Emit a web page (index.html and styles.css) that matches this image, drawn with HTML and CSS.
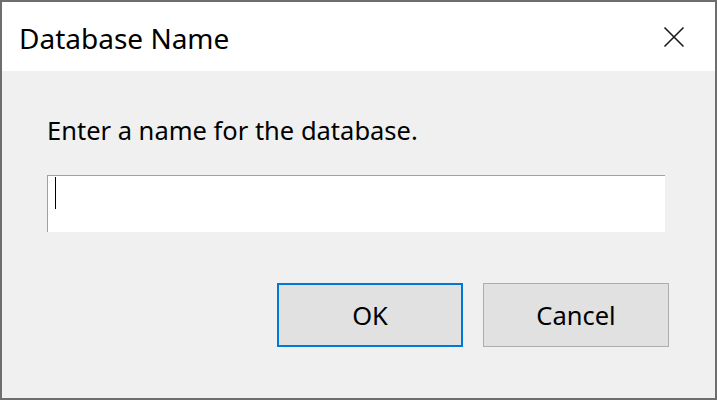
FILE: index.html
```html
<!DOCTYPE html>
<html lang="en">
<head>
    <meta charset="UTF-8">
    <meta name="viewport" content="width=device-width, initial-scale=1.0">
    <title>Database Name</title>
    <link rel="stylesheet" href="styles.css">
</head>
<body>

<div class="dialog">
    <div class="titlebar">
        <span class="title">Database Name</span>
        <button class="close" aria-label="Close">
            <svg width="22" height="22" viewBox="0 0 22 22">
                <path d="M1.5 1.5 L20.5 20.5 M20.5 1.5 L1.5 20.5" stroke="#1a1a1a" stroke-width="1.6" fill="none"/>
            </svg>
        </button>
    </div>
    <div class="content">
        <p class="prompt">Enter a name for the database.</p>
        <div class="field"><span class="caret"></span></div>
        <div class="actions">
            <button class="btn btn-default">OK</button>
            <button class="btn">Cancel</button>
        </div>
    </div>
</div>

</body>
</html>
```

FILE: styles.css
```css
body {
    margin: 0;
    font-family: "Segoe UI", "Noto Sans", sans-serif;
    color: #000;
}
.dialog {
    width: 717px;
    height: 400px;
    box-sizing: border-box;
    border: 2px solid #6e6e6e;
    background: #f0f0f0;
    display: flex;
    flex-direction: column;
}
.titlebar {
    height: 69px;
    background: #fff;
    display: flex;
    align-items: center;
    justify-content: space-between;
}
.title {
    margin-left: 17px;
    font-size: 28px;
    line-height: 1;
    margin-top: 3px;
}
.close {
    border: none;
    background: none;
    padding: 0;
    margin-right: 30px;
    width: 22px;
    height: 22px;
}
.close svg {
    display: block;
}
.content {
    padding: 0 46px 0 45px;
}
.prompt {
    margin: 44px 0 0;
    font-size: 25.5px;
    line-height: 30px;
}
.field {
    margin-top: 30px;
    width: 618px;
    height: 57px;
    box-sizing: border-box;
    background: #fff;
    border-top: 1px solid #a0a0a0;
    border-left: 1px solid #a0a0a0;
    padding: 1px 0 0 7px;
}
.caret {
    display: block;
    width: 1px;
    height: 32px;
    background: #000;
}
.actions {
    margin-top: 51px;
    display: flex;
    justify-content: flex-end;
    gap: 20px;
}
.btn {
    width: 186px;
    height: 64px;
    box-sizing: border-box;
    background: #e1e1e1;
    border: 1px solid #adadad;
    font-family: inherit;
    font-size: 25.5px;
    color: #000;
    padding: 0;
}
.btn-default {
    border: 2px solid #0078d7;
}
```
